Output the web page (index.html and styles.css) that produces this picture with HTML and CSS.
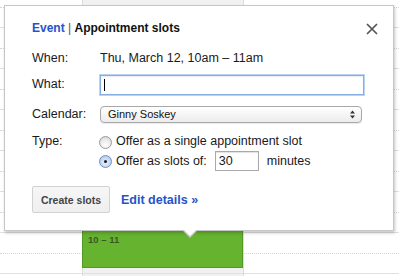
FILE: index.html
```html
<!DOCTYPE html>
<html>
<head>
<meta charset="utf-8">
<link rel="stylesheet" href="styles.css">
</head>
<body>
<div class="cal">
  <div class="col col-time">
    <div class="slot"><div class="half"></div></div>
    <div class="slot"><div class="half"></div></div>
    <div class="slot"><div class="half"></div></div>
    <div class="slot"><div class="half"></div></div>
    <div class="slot"><div class="half"></div></div>
    <div class="slot"><div class="half"></div></div>
    <div class="slot"><div class="half"></div></div>
  </div>
  <div class="col col-day">
    <div class="slot"><div class="half"></div></div>
    <div class="slot"><div class="half"></div></div>
    <div class="slot"><div class="half"></div></div>
    <div class="slot"><div class="half"></div></div>
    <div class="slot"><div class="half"></div></div>
    <div class="slot"><div class="half"></div></div>
    <div class="slot"><div class="half"></div></div>
  </div>
  <div class="col col-next">
    <div class="slot"><div class="half"></div></div>
    <div class="slot"><div class="half"></div></div>
    <div class="slot"><div class="half"></div></div>
    <div class="slot"><div class="half"></div></div>
    <div class="slot"><div class="half"></div></div>
    <div class="slot"><div class="half"></div></div>
    <div class="slot"><div class="half"></div></div>
  </div>

  <div class="event">10 – 11</div>

  <div class="bubble">
    <div class="pointer"></div>
    <div class="pointer-inner"></div>
    <svg class="close" width="12" height="12" viewBox="0 0 12 12">
      <path d="M1 1 L11 11 M11 1 L1 11" stroke="#555" stroke-width="1.7" fill="none"/>
    </svg>
    <div class="title">
      <span class="tab-link">Event</span><span class="sep"> | </span><span class="tab-active">Appointment slots</span>
    </div>
    <div class="form">
      <div class="row row-when">
        <div class="label">When:</div>
        <div class="value">Thu, March 12, 10am – 11am</div>
      </div>
      <div class="row row-what">
        <div class="label">What:</div>
        <div class="value"><div class="text-input focused"><span class="caret"></span></div></div>
      </div>
      <div class="row row-cal">
        <div class="label">Calendar:</div>
        <div class="value">
          <div class="select">
            <span>Ginny Soskey</span>
            <svg class="arrows" width="5" height="9" viewBox="0 0 5 9">
              <path d="M0 3.5 L2.5 0.5 L5 3.5 Z M0 5.5 L2.5 8.5 L5 5.5 Z" fill="#333"/>
            </svg>
          </div>
        </div>
      </div>
      <div class="row row-type1">
        <div class="label">Type:</div>
        <div class="value radio-line"><span class="radio"></span><span>Offer as a single appointment slot</span></div>
      </div>
      <div class="row row-type2">
        <div class="label"></div>
        <div class="value radio-line"><span class="radio checked"></span><span>Offer as slots of:</span><div class="num-input">30</div><span>minutes</span></div>
      </div>
    </div>
    <div class="actions">
      <div class="button">Create slots</div>
      <span class="edit-link">Edit details »</span>
    </div>
  </div>
</div>
</body>
</html>
```

FILE: styles.css
```css
* { box-sizing: border-box; }
html, body { margin: 0; padding: 0; }
body {
  font-family: "Liberation Sans", Arial, sans-serif;
  background: #fff;
  color: #222;
}
.cal {
  position: relative;
  display: flex;
  width: 399px;
  height: 276px;
  overflow: hidden;
  background: #fff;
}
.col {
  margin-top: -13px;
  border-right: 1px solid #dcdcdc;
}
.col-time { width: 83px; }
.col-day { width: 161px; background: #f1f1f1; }
.col-next { flex: 1; border-right: none; }
.slot {
  height: 41px;
  border-bottom: 1px solid #e0e0e0;
}
.half {
  height: 21px;
  border-bottom: 1px dotted #d6d6d6;
}

.event {
  position: absolute;
  left: 82px;
  top: 230px;
  width: 161px;
  height: 38px;
  background: #65b32e;
  border: 1px solid #519a26;
  padding: 3px 5px;
  font-size: 9.5px;
  font-weight: bold;
  color: #3a5a22;
  line-height: 12px;
}

.bubble {
  position: absolute;
  left: 4px;
  top: 5px;
  width: 390px;
  height: 226px;
  background: #fff;
  border: 1px solid #c6c6c6;
  box-shadow: 1px 2px 3px rgba(0, 0, 0, 0.22);
  padding: 14px 0 0 27px;
}
.pointer {
  position: absolute;
  left: 177px;
  bottom: -8px;
  width: 0;
  height: 0;
  border-left: 8px solid transparent;
  border-right: 8px solid transparent;
  border-top: 8px solid #c6c6c6;
}
.pointer-inner {
  position: absolute;
  left: 178px;
  bottom: -6px;
  width: 0;
  height: 0;
  border-left: 7px solid transparent;
  border-right: 7px solid transparent;
  border-top: 7px solid #fff;
}
.close {
  position: absolute;
  top: 17px;
  right: 15px;
}
.title {
  font-size: 12px;
  font-weight: bold;
  line-height: 16px;
  color: #111;
}
.tab-link { color: #2653c9; }
.sep { font-weight: normal; color: #555; }

.form {
  margin-top: 14px;
  font-size: 12.5px;
  line-height: 16px;
  color: #1a1a1a;
}
.row {
  display: flex;
  align-items: center;
}
.label { width: 68px; flex: none; }
.value { flex: none; }
.row-when { height: 16px; }
.row-what { margin-top: 9px; height: 20px; }
.row-what .label { margin-top: -2px; }
.row-cal { margin-top: 11px; height: 16px; }
.row-type1 { margin-top: 11px; height: 16px; }
.row-type2 { margin-top: 2px; height: 20px; }

.text-input {
  width: 264px;
  height: 20px;
  background: #fff;
  border: 1px solid #86aee0;
  box-shadow: 0 0 0 1px #b9d3f2, inset 0 1px 1px rgba(0,0,0,0.08);
  padding: 3px 0 0 3px;
}
.caret {
  display: block;
  width: 1px;
  height: 12px;
  background: #000;
}
.select {
  width: 262px;
  height: 17px;
  border: 1px solid #a8a8a8;
  border-radius: 4px;
  background: linear-gradient(#ffffff, #ececec);
  box-shadow: 0 1px 1px rgba(0,0,0,0.08);
  display: flex;
  align-items: center;
  justify-content: space-between;
  padding: 0 6px 0 7px;
  font-size: 11px;
  color: #111;
}
.arrows { display: block; }

.radio-line {
  display: flex;
  align-items: center;
  margin-left: -1px;
}
.radio {
  width: 13px;
  height: 13px;
  border-radius: 50%;
  border: 1px solid #9a9a9a;
  background: radial-gradient(circle at 50% 70%, #ffffff 0%, #e6e6e6 60%, #cfcfcf 100%);
  margin-right: 4px;
  margin-top: 2px;
  flex: none;
  position: relative;
}
.radio.checked {
  border-color: #6d8fc2;
  background: radial-gradient(circle at 50% 60%, #e9f2fc 0%, #b9d0ee 70%, #8fb0dc 100%);
  margin-top: 1px;
}
.radio.checked::after {
  content: "";
  position: absolute;
  left: 4px;
  top: 4px;
  width: 3px;
  height: 3px;
  border-radius: 50%;
  background: #1a1a1a;
}
.num-input {
  width: 44px;
  height: 20px;
  border: 1px solid #a9a9a9;
  box-shadow: inset 0 1px 1px rgba(0,0,0,0.12);
  margin: 0 8px 0 8px;
  padding: 1px 0 0 3px;
  line-height: 17px;
}

.actions {
  margin-top: 15px;
  display: flex;
  align-items: center;
}
.button {
  width: 78px;
  height: 27px;
  border: 1px solid #d2d2d2;
  border-radius: 2px;
  background: linear-gradient(#f6f6f6, #efefef);
  font-size: 10.5px;
  font-weight: bold;
  color: #444;
  display: flex;
  align-items: center;
  justify-content: center;
}
.edit-link {
  margin-left: 11px;
  font-size: 12.5px;
  font-weight: bold;
  color: #2653c9;
}
```
